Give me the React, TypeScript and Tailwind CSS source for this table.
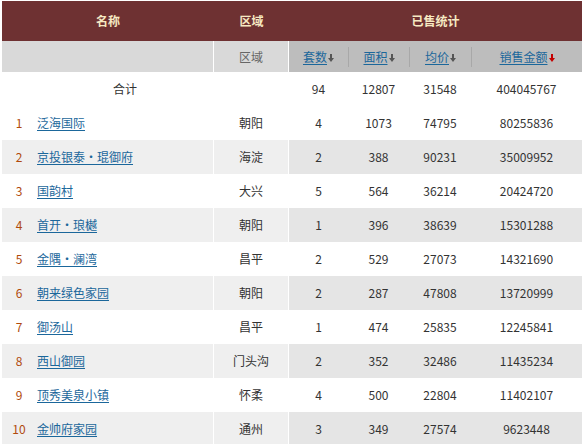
import React from "react";

const rows = [
  { rank: 1, name: "泛海国际", area: "朝阳", count: 4, size: 1073, price: 74795, total: 80255836 },
  { rank: 2, name: "京投银泰・琨御府", area: "海淀", count: 2, size: 388, price: 90231, total: 35009952 },
  { rank: 3, name: "国韵村", area: "大兴", count: 5, size: 564, price: 36214, total: 20424720 },
  { rank: 4, name: "首开・琅樾", area: "朝阳", count: 1, size: 396, price: 38639, total: 15301288 },
  { rank: 5, name: "金隅・澜湾", area: "昌平", count: 2, size: 529, price: 27073, total: 14321690 },
  { rank: 6, name: "朝来绿色家园", area: "朝阳", count: 2, size: 287, price: 47808, total: 13720999 },
  { rank: 7, name: "御汤山", area: "昌平", count: 1, size: 474, price: 25835, total: 12245841 },
  { rank: 8, name: "西山御园", area: "门头沟", count: 2, size: 352, price: 32486, total: 11435234 },
  { rank: 9, name: "顶秀美泉小镇", area: "怀柔", count: 4, size: 500, price: 22804, total: 11402107 },
  { rank: 10, name: "金帅府家园", area: "通州", count: 3, size: 349, price: 27574, total: 9623448 },
];

const cols = "grid grid-cols-[34px_178px_75px_59px_61px_62px_1fr]";

const SortArrow = ({ red }: { red?: boolean }) => (
  <svg width="6" height="8" viewBox="0 0 6 8" className="ml-px mt-[3px] inline-block" fill={red ? "#c40000" : "#555555"}>
    <path d="M2 0h2v4h2L3 8 0 4h2z" />
  </svg>
);

const SortLink = ({ label, red, sep }: { label: string; red?: boolean; sep?: boolean }) => (
  <div className="flex items-center h-full">
    {sep ? <div className="w-px h-[20px] bg-[#a8a8a8]" /> : null}
    <div className="flex-1 flex justify-center items-center">
      <a href="#" className="text-[#1b679b] underline underline-offset-2">
        {label}
      </a>
      <SortArrow red={red} />
    </div>
  </div>
);

export default function App() {
  return (
    <div className="w-[582px] h-[444px] overflow-hidden bg-white pt-px pl-[2px] font-['Noto_Sans_CJK_SC',sans-serif] text-[12px] text-[#333333]">
      {/* Header */}
      <div className={`${cols} h-[40px] bg-[#6e3132] text-[#f6e9c2] font-bold`}>
        <div className="col-span-2 flex items-center justify-center">名称</div>
        <div className="flex items-center justify-center">区域</div>
        <div className="col-span-4 flex items-center justify-center">已售统计</div>
      </div>

      {/* Sub header */}
      <div className={`${cols} h-[31px]`}>
        <div className="col-span-2 bg-[#d9d9d9] border-r border-white" />
        <div className="bg-[#d9d9d9] border-r border-white flex items-center justify-center text-[#666666]">区域</div>
        <div className="bg-[#bdbdbd]"><SortLink label="套数" /></div>
        <div className="bg-[#bdbdbd]"><SortLink label="面积" sep /></div>
        <div className="bg-[#bdbdbd]"><SortLink label="均价" sep /></div>
        <div className="bg-[#bdbdbd]"><SortLink label="销售金额" red sep /></div>
      </div>

      {/* Sum row */}
      <div className={`${cols} h-[34px] items-center`}>
        <div />
        <div className="text-center">合计</div>
        <div />
        <div className="text-center">94</div>
        <div className="text-center">12807</div>
        <div className="text-center">31548</div>
        <div className="text-center">404045767</div>
      </div>

      {rows.map((r) => {
        const grey = r.rank % 2 === 0;
        const light = grey ? "bg-[#efefef]" : "bg-white";
        const dark = grey ? "bg-[#e5e5e5]" : "bg-white";
        return (
          <div key={r.rank} className={`${cols} h-[34px]`}>
            <div className={`${light} flex items-center justify-center text-[#b04a0c]`}>{r.rank}</div>
            <div className={`${light} border-r border-white flex items-center pl-px`}>
              <a href="#" className="text-[#1b679b] underline underline-offset-2">
                {r.name}
              </a>
            </div>
            <div className={`${light} border-r border-white flex items-center justify-center`}>{r.area}</div>
            <div className={`${dark} flex items-center justify-center`}>{r.count}</div>
            <div className={`${dark} flex items-center justify-center`}>{r.size}</div>
            <div className={`${dark} flex items-center justify-center`}>{r.price}</div>
            <div className={`${dark} flex items-center justify-center`}>{r.total}</div>
          </div>
        );
      })}
    </div>
  );
}
